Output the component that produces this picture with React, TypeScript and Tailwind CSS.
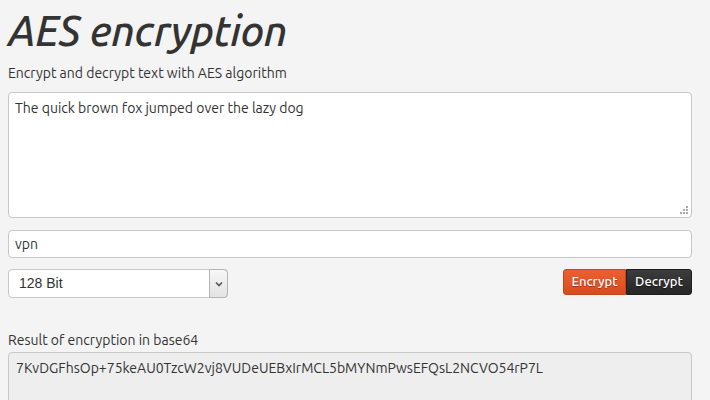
import React from 'react';

const UI = "font-['Ubuntu','Open_Sans','DejaVu_Sans',sans-serif]";

function BitSelect() {
    return (
        <div className="relative w-[220px] h-[29px]">
            <select
                defaultValue="128"
                className="appearance-none w-full h-full rounded-[4px] border border-[#c8c8c8] bg-white pl-[10px] text-[14px] text-[#333] font-['Liberation_Sans',Arial,sans-serif] outline-none"
            >
                <option value="128">128 Bit</option>
                <option value="192">192 Bit</option>
                <option value="256">256 Bit</option>
            </select>
            <div className="pointer-events-none absolute right-0 top-0 h-full w-[19px] rounded-r-[4px] border border-[#b5b5b5] bg-gradient-to-b from-[#f7f7f7] to-[#e3e3e3] flex items-center justify-center">
                <svg width="8" height="6" viewBox="0 0 8 6">
                    <path d="M1 1.5 L4 4.5 L7 1.5" fill="none" stroke="#555" strokeWidth="1.6" />
                </svg>
            </div>
        </div>
    );
}

export default function App() {
    return (
        <div className={`min-h-[400px] w-[710px] bg-[#f4f4f4] px-[8px] text-[#333] ${UI}`}>
            <h1 className="pt-[5px] text-[42px] leading-[52px] italic font-medium text-[#333] tracking-[-0.4px]">
                AES encryption
            </h1>
            <p className="mt-[7px] text-[14px] leading-[18px]">Encrypt and decrypt text with AES algorithm</p>

            <div className="relative mt-[10px] w-[684px]">
                <textarea
                    defaultValue="The quick brown fox jumped over the lazy dog"
                    className={`block w-[684px] h-[126px] resize-none rounded-[4px] border border-[#c8c8c8] bg-white px-[6px] py-[6px] text-[14px] leading-[18px] text-[#333] outline-none ${UI}`}
                />
                <svg className="pointer-events-none absolute right-[4px] bottom-[4px]" width="8" height="8" viewBox="0 0 8 8">
                    <rect x="6" y="0" width="2" height="2" fill="#aaa" />
                    <rect x="3" y="3" width="2" height="2" fill="#aaa" />
                    <rect x="6" y="3" width="2" height="2" fill="#aaa" />
                    <rect x="0" y="6" width="2" height="2" fill="#aaa" />
                    <rect x="3" y="6" width="2" height="2" fill="#aaa" />
                    <rect x="6" y="6" width="2" height="2" fill="#aaa" />
                </svg>
            </div>

            <input
                defaultValue="vpn"
                className={`mt-[12px] block w-[684px] h-[28px] rounded-[4px] border border-[#c8c8c8] bg-white px-[6px] text-[14px] text-[#333] outline-none ${UI}`}
            />

            <div className="mt-[11px] w-[684px] flex items-start justify-between">
                <BitSelect />
                <div className="flex">
                    <button className="h-[26px] w-[63px] rounded-l-[3px] border border-[#c4461b] bg-gradient-to-b from-[#ec5f30] to-[#db4a1d] text-[13px] font-medium text-white [text-shadow:0_1px_1px_rgba(0,0,0,0.35)]">
                        Encrypt
                    </button>
                    <button className="h-[26px] w-[66px] rounded-r-[3px] border border-[#1e1e1e] bg-gradient-to-b from-[#3c3c3c] to-[#262626] text-[13px] font-medium text-white [text-shadow:0_1px_1px_rgba(0,0,0,0.5)]">
                        Decrypt
                    </button>
                </div>
            </div>

            <p className="mt-[33px] text-[14px] leading-[18px]">Result of encryption in base64</p>
            <div className="mt-[3px] h-[60px] w-[684px] rounded-[4px] border border-[#c8c8c8] bg-[#eeeeee] px-[7px] py-[6px] text-[14px] leading-[18px]">
                7KvDGFhsOp+75keAU0TzcW2vj8VUDeUEBxIrMCL5bMYNmPwsEFQsL2NCVO54rP7L
            </div>
        </div>
    );
}
